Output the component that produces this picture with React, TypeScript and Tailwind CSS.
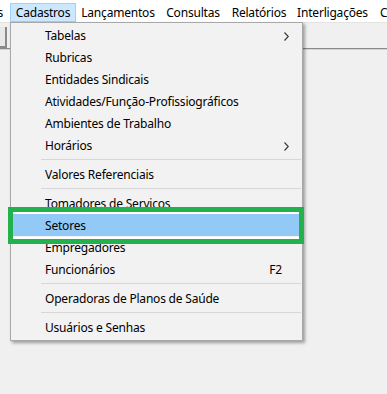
import type { ReactNode } from "react";

const font = { fontFamily: '"Noto Sans", "Open Sans", sans-serif' };

type Item =
  | { kind: "item"; label: string; sub?: boolean; key?: string; active?: boolean }
  | { kind: "sep" };

const items: Item[] = [
  { kind: "item", label: "Tabelas", sub: true },
  { kind: "item", label: "Rubricas" },
  { kind: "item", label: "Entidades Sindicais" },
  { kind: "item", label: "Atividades/Função-Profissiográficos" },
  { kind: "item", label: "Ambientes de Trabalho" },
  { kind: "item", label: "Horários", sub: true },
  { kind: "sep" },
  { kind: "item", label: "Valores Referenciais" },
  { kind: "sep" },
  { kind: "item", label: "Tomadores de Serviços" },
  { kind: "item", label: "Setores", active: true },
  { kind: "item", label: "Empregadores" },
  { kind: "item", label: "Funcionários", key: "F2" },
  { kind: "sep" },
  { kind: "item", label: "Operadoras de Planos de Saúde" },
  { kind: "sep" },
  { kind: "item", label: "Usuários e Senhas" },
];

function Chevron() {
  return (
    <svg width="5" height="9" viewBox="0 0 5 9" className="mr-[11px] ml-auto">
      <path d="M0.5 0.5 L4.3 4.5 L0.5 8.5" fill="none" stroke="#333" strokeWidth="1.1" />
    </svg>
  );
}

function TopItem({ w, active, children }: { w: string; active?: boolean; children: ReactNode }) {
  return (
    <div
      className={`${w} flex h-[19px] shrink-0 items-center justify-center whitespace-nowrap border pt-[1px] ${
        active ? "border-[#99d1ff] bg-[#cce8ff]" : "border-transparent"
      }`}
    >
      {children}
    </div>
  );
}

export default function App() {
  return (
    <div
      className="relative h-[394px] w-[387px] overflow-hidden bg-[#f0f0f0] text-[12px] tracking-[-0.2px] text-black"
      style={font}
    >
      {/* barra de menus */}
      <div className="flex h-[22px] items-end bg-white">
        <div className="flex h-[19px] w-[10px] shrink-0 items-center justify-end overflow-hidden whitespace-nowrap pr-[7px] pt-[1px]">
          Arquivos
        </div>
        <TopItem w="w-[66px]" active>
          Cadastros
        </TopItem>
        <TopItem w="w-[84px]">Lançamentos</TopItem>
        <TopItem w="w-[66px]">Consultas</TopItem>
        <TopItem w="w-[66px]">Relatórios</TopItem>
        <TopItem w="w-[81px]">Interligações</TopItem>
        <div className="flex h-[19px] shrink-0 items-center whitespace-nowrap pl-[7px] pt-[1px]">Configurações</div>
      </div>

      {/* barra de ferramentas */}
      <div className="flex h-[28px] flex-col border-t border-[#e3e3e3]">
        <div className="flex flex-1 items-start">
          <div className="mt-[4px] h-[21px] w-[7px] border-r-2 border-b-2 border-[#8a8a8a] bg-[#e8e8e8]" />
        </div>
        <div className="h-[2px] bg-[#8a8a8a]" />
        <div className="h-[1px] bg-[#d4d4d4]" />
      </div>

      {/* menu Cadastros */}
      <div className="absolute left-[10px] top-[22px] w-[293px] border border-[#a8a8a8] bg-[#f2f2f2] pb-[2px] pt-[1px] shadow-[2px_2px_3px_rgba(0,0,0,0.35)]">
        {items.map((it, i) =>
          it.kind === "sep" ? (
            <div key={i} className="flex h-[7px] items-center pl-[30px] pr-[1px]">
              <div className="h-[1px] flex-1 bg-[#d7d7d7]" />
            </div>
          ) : (
            <div key={i} className="flex h-[22px] px-[2px]">
              <div
                className={`flex flex-1 items-center whitespace-nowrap pl-[32px] pt-[2px] ${
                  it.active ? "bg-[#93c9f6]" : ""
                }`}
              >
                <span>{it.label}</span>
                {it.sub && <Chevron />}
                {it.key && <span className="ml-auto mr-[18px]">{it.key}</span>}
              </div>
            </div>
          ),
        )}
      </div>

      {/* destaque verde */}
      <div className="absolute left-[8px] top-[207px] h-[37px] w-[296px] border-[5px] border-[#22b14c] shadow-[inset_0_2px_0_#fff,inset_0_-2px_0_#fff]" />
    </div>
  );
}
